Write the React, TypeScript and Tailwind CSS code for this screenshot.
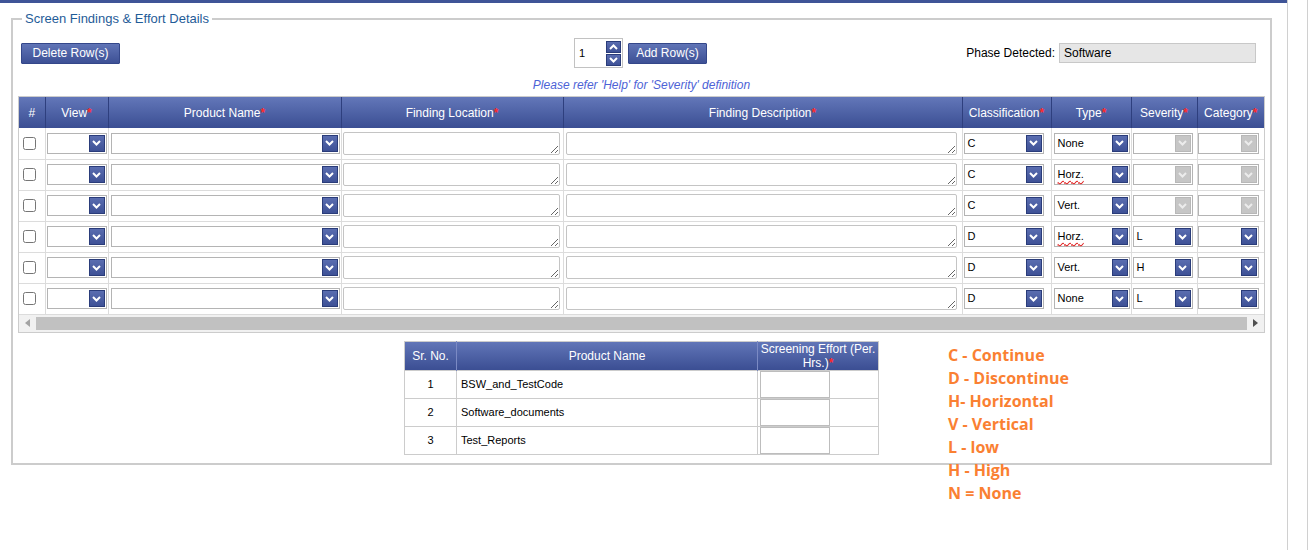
import React from "react";

const Chevron = ({ color = "#ffffff", up = false }: { color?: string; up?: boolean }) => (
  <svg width="9" height="6" viewBox="0 0 9 6" className="block">
    <path d={up ? "M1 5 L4.5 1.5 L8 5" : "M1 1 L4.5 4.5 L8 1"} stroke={color} strokeWidth="2" fill="none" />
  </svg>
);

function Sel({ text = "", w, disabled = false, wavy = false }: { text?: string; w: string; disabled?: boolean; wavy?: boolean }) {
  return (
    <div className={`flex h-[21px] items-center justify-between border border-[#b4b4b4] bg-white pl-[3px] pr-[1px] ${w}`}>
      <span className={wavy ? "text-[11px] leading-none text-black underline decoration-wavy decoration-[#e02020] underline-offset-2" : "text-[11px] leading-none text-black"}>{text}</span>
      {disabled ? (
        <div className="flex h-[17px] w-[16px] items-center justify-center border border-[#b8b8b8] bg-[#c6c6c6]">
          <Chevron color="#ececec" />
        </div>
      ) : (
        <div className="flex h-[17px] w-[16px] items-center justify-center border border-[#2a3c7a] bg-gradient-to-b from-[#5a6db0] to-[#3e5196]">
          <Chevron />
        </div>
      )}
    </div>
  );
}

function Area({ w }: { w: string }) {
  return (
    <textarea
      readOnly
      className={`block h-[23px] rounded-[2px] border border-[#c4c4c4] bg-white ${w}`}
    />
  );
}

const Req = () => <span className="font-bold text-[#ff2a2a]">*</span>;

const rows = [
  { cls: "C", type: "None", sev: "", dis: true, wavy: false },
  { cls: "C", type: "Horz.", sev: "", dis: true, wavy: true },
  { cls: "C", type: "Vert.", sev: "", dis: true, wavy: false },
  { cls: "D", type: "Horz.", sev: "L", dis: false, wavy: true },
  { cls: "D", type: "Vert.", sev: "H", dis: false, wavy: false },
  { cls: "D", type: "None", sev: "L", dis: false, wavy: false },
];

const products = ["BSW_and_TestCode", "Software_documents", "Test_Reports"];

const legendLines = [
  "C - Continue",
  "D - Discontinue",
  "H- Horizontal",
  "V - Vertical",
  "L - low",
  "H - High",
  "N = None",
];

function BlueButton({ label, w }: { label: string; w: string }) {
  return (
    <div className={`flex h-[21px] items-center justify-center rounded-[1px] border border-[#34478a] bg-gradient-to-b from-[#6074b6] to-[#3d5095] text-[12px] text-white ${w}`}>
      {label}
    </div>
  );
}

export default function App() {
  const th = "h-[31px] border-r border-[#2e3f7e] p-0 text-center align-middle text-[12px] font-normal text-white";
  const td = "h-[31px] border-r border-b border-[#dcdcdc] p-0 align-middle";
  return (
    <div className="flex h-[550px] w-[1316px] overflow-hidden bg-white font-['Liberation_Sans',Arial,sans-serif] text-[12px] text-[#1a1a1a]">
      <div className="w-[1287px] border-t-[3px] border-[#3f5497] pl-[11px]">
        <fieldset className="mt-[8px] w-[1261px] border-2 border-[#cccccc] px-[5px] pb-[8px]">
          <legend className="ml-[4px] px-[3px] text-[13px] leading-[16px] text-[#1f5c98]">Screen Findings &amp; Effort Details</legend>

          {/* toolbar */}
          <div className="mt-[11px] grid h-[30px] grid-cols-3 items-center pl-[3px] pr-[9px]">
            <div className="justify-self-start">
              <BlueButton label="Delete Row(s)" w="w-[99px]" />
            </div>
            <div className="flex items-center justify-self-center pl-[4px]">
              <div className="flex h-[30px] w-[49px] items-center justify-between border border-[#c2c2c2] bg-white pl-[4px] pr-[1px]">
                <span className="text-[11px] text-black">1</span>
                <div className="flex flex-col gap-[1px]">
                  <div className="flex h-[12px] w-[15px] items-center justify-center border border-[#2a3c7a] bg-gradient-to-b from-[#5a6db0] to-[#3e5196]">
                    <Chevron up />
                  </div>
                  <div className="flex h-[12px] w-[15px] items-center justify-center border border-[#2a3c7a] bg-gradient-to-b from-[#5a6db0] to-[#3e5196]">
                    <Chevron />
                  </div>
                </div>
              </div>
              <div className="ml-[5px]">
                <BlueButton label="Add Row(s)" w="w-[79px]" />
              </div>
            </div>
            <div className="flex items-center justify-self-end">
              <span className="text-[12px] text-black">Phase Detected:</span>
              <div className="ml-[4px] flex h-[20px] w-[197px] items-center border border-[#c8c8c8] bg-[#e6e6e6] pl-[4px] text-[12px] text-black">
                Software
              </div>
            </div>
          </div>

          <div className="mt-[10px] text-center text-[12px] italic leading-[14px] text-[#4d62d6]">
            Please refer 'Help' for 'Severity' definition
          </div>

          {/* main table */}
          <div className="mt-[4px] w-[1247px] border border-[#cccccc]">
            <table className="w-[1245px] table-fixed border-collapse">
              <colgroup>
                <col className="w-[26px]" />
                <col className="w-[63px]" />
                <col className="w-[233px]" />
                <col className="w-[222px]" />
                <col className="w-[399px]" />
                <col className="w-[89px]" />
                <col className="w-[80px]" />
                <col className="w-[66px]" />
                <col className="w-[67px]" />
              </colgroup>
              <thead>
                <tr className="bg-gradient-to-b from-[#6377b9] to-[#3b4e93]">
                  <th className={th}>#</th>
                  <th className={th}>View<Req /></th>
                  <th className={th}>Product Name<Req /></th>
                  <th className={th}>Finding Location<Req /></th>
                  <th className={th}>Finding Description<Req /></th>
                  <th className={th}>Classification<Req /></th>
                  <th className={th}>Type<Req /></th>
                  <th className={th}>Severity<Req /></th>
                  <th className="h-[31px] p-0 text-center align-middle text-[12px] font-normal text-white">Category<Req /></th>
                </tr>
              </thead>
              <tbody>
                {rows.map((r, i) => (
                  <tr key={i}>
                    <td className={td}>
                      <input type="checkbox" className="ml-[4px] block h-[13px] w-[13px]" readOnly />
                    </td>
                    <td className={`${td} pl-[1px]`}><Sel w="w-[60px]" /></td>
                    <td className={`${td} pl-[2px]`}><Sel w="w-[229px]" /></td>
                    <td className={`${td} pl-[1px]`}><Area w="w-[217px]" /></td>
                    <td className={`${td} pl-[2px]`}><Area w="w-[391px]" /></td>
                    <td className={`${td} pl-[1px]`}><Sel w="w-[80px]" text={r.cls} /></td>
                    <td className={`${td} pl-[2px]`}><Sel w="w-[76px]" text={r.type} wavy={r.wavy} /></td>
                    <td className={`${td} pl-[1px]`}><Sel w="w-[60px]" text={r.sev} disabled={r.dis} /></td>
                    <td className="h-[31px] border-b border-[#dcdcdc] p-0 align-middle"><Sel w="w-[61px]" disabled={r.dis} /></td>
                  </tr>
                ))}
              </tbody>
            </table>
            {/* horizontal scrollbar */}
            <div className="flex h-[17px] items-center bg-[#f1f1f1]">
              <div className="flex h-[17px] w-[17px] items-center justify-center">
                <svg width="5" height="8" viewBox="0 0 5 8"><path d="M5 0 L0 4 L5 8 Z" fill="#a3a3a3" /></svg>
              </div>
              <div className="h-[13px] flex-1 bg-[#c1c1c1]" />
              <div className="flex h-[17px] w-[17px] items-center justify-center">
                <svg width="5" height="8" viewBox="0 0 5 8"><path d="M0 0 L5 4 L0 8 Z" fill="#505050" /></svg>
              </div>
            </div>
          </div>

          {/* effort table + legend */}
          <div className="mt-[8px] grid grid-cols-[1fr_auto_1fr]">
            <div />
            <table className="w-[474px] table-fixed border-collapse border border-[#cccccc]">
              <colgroup>
                <col className="w-[52px]" />
                <col className="w-[301px]" />
                <col className="w-[121px]" />
              </colgroup>
              <thead>
                <tr className="bg-gradient-to-b from-[#6377b9] to-[#3b4e93]">
                  <th className="h-[29px] border-r border-[#7b8ac4] p-0 text-center text-[12px] font-normal text-white">Sr. No.</th>
                  <th className="h-[29px] border-r border-[#7b8ac4] p-0 text-center text-[12px] font-normal text-white">Product Name</th>
                  <th className="h-[29px] p-0 text-center text-[12px] font-normal leading-[14px] text-white">
                    Screening Effort (Per.
                    <br />
                    Hrs.)<Req />
                  </th>
                </tr>
              </thead>
              <tbody>
                {products.map((p, i) => (
                  <tr key={p}>
                    <td className="h-[28px] border border-[#cccccc] p-0 text-center text-[11px] text-black">{i + 1}</td>
                    <td className="h-[28px] border border-[#cccccc] p-0 pl-[4px] text-[11px] text-black">{p}</td>
                    <td className="h-[28px] border border-[#cccccc] p-0 pl-[2px] align-top">
                      <div className="h-[27px] w-[70px] border border-[#bdbdbd] bg-white" />
                    </td>
                  </tr>
                ))}
              </tbody>
            </table>
            <div className="h-0 pl-[69px] pt-[3px]">
              {legendLines.map((l) => (
                <div key={l} className="whitespace-nowrap font-['Open_Sans',sans-serif] text-[16px] font-bold leading-[23px] text-[#fa8032]">
                  {l}
                </div>
              ))}
            </div>
          </div>
        </fieldset>
      </div>
      <div className="w-[20px] border-l border-[#d0d0d0]" />
      <div className="flex-1 border-l border-[#d0d0d0]" />
    </div>
  );
}
